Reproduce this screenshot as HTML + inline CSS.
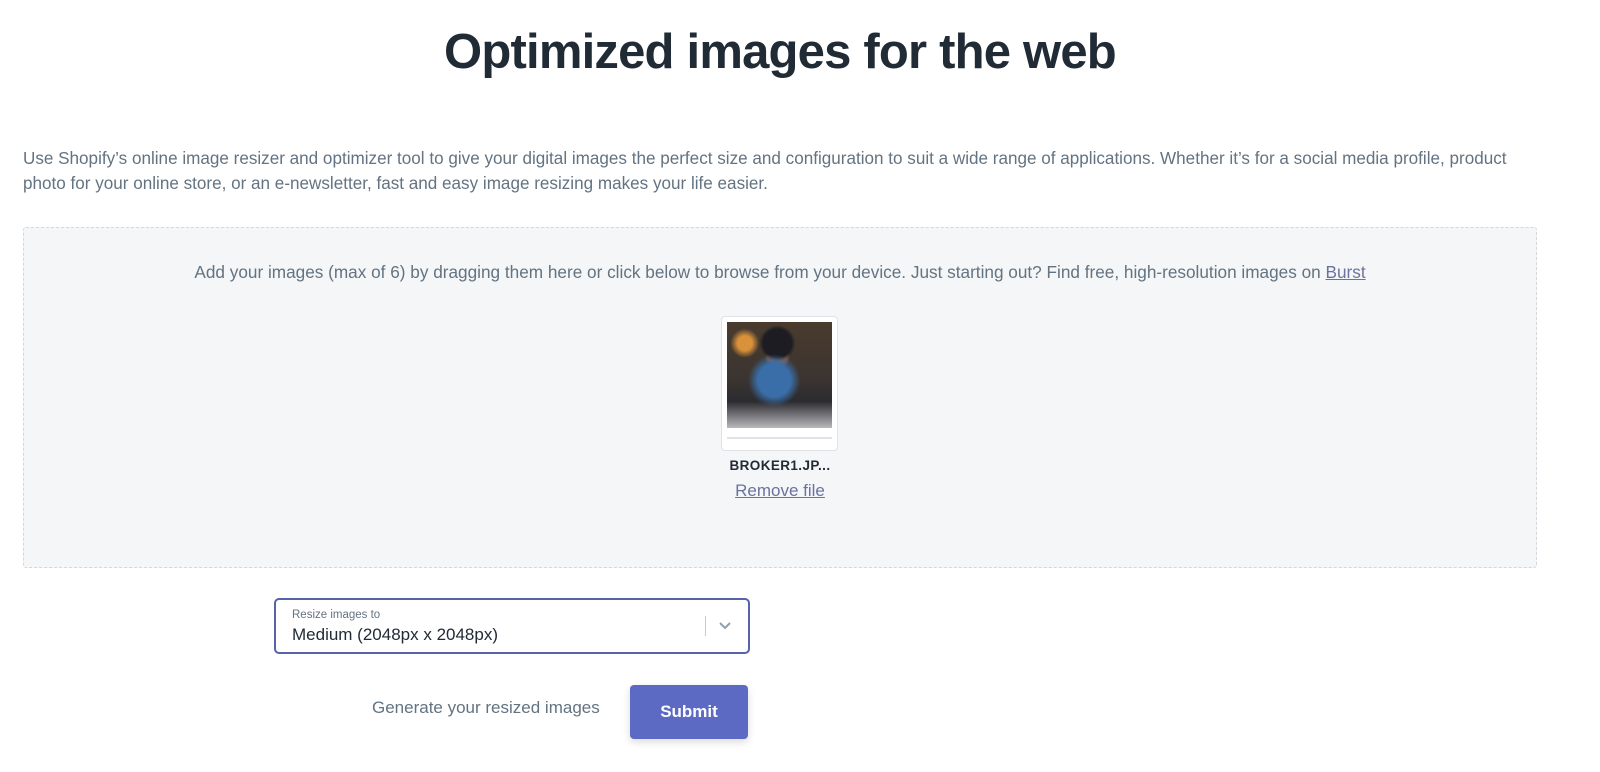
<!DOCTYPE html>
<html><head><style>
*{margin:0;padding:0;box-sizing:border-box}
body{width:1600px;height:772px;background:#fff;font-family:"Liberation Sans",sans-serif;position:relative;overflow:hidden}
.a{position:absolute}
h1{position:absolute;left:0;width:1560px;text-align:center;top:24px;font-size:49px;font-weight:bold;color:#212b36;letter-spacing:-0.8px}
p.i{position:absolute;left:23px;top:146px;width:1530px;font-size:17.1px;line-height:25px;color:#637381}
.dz{left:23px;top:227px;width:1514px;height:341px;background:#f4f6f8;border:1px dashed #d3d8dd;border-radius:3px}
</style></head><body>
<h1>Optimized images for the web</h1>
<p class="i">Use Shopify’s online image resizer and optimizer tool to give your digital images the perfect size and configuration to suit a wide range of applications. Whether it’s for a social media profile, product photo for your online store, or an e-newsletter, fast and easy image resizing makes your life easier.</p>
<div class="a dz"></div>
<div class="a" style="left:0;width:1560px;top:262px;text-align:center;font-size:17.2px;color:#637381">Add your images (max of 6) by dragging them here or click below to browse from your device. Just starting out? Find free, high-resolution images on <span style="text-decoration:underline;color:#6a739e">Burst</span></div>
<div class="a" style="left:721px;top:316px;width:117px;height:135px;background:#fff;border:1px solid #dfe3e8;border-radius:4px"></div>
<div class="a" style="left:727px;top:322px;width:105px;height:106px;background:radial-gradient(circle at 17% 20%,#d9913a 0 6%,transparent 12%),radial-gradient(ellipse at 45% 55%,#3a6ea8 0 20%,transparent 32%),radial-gradient(circle at 48% 20%,#1c1c22 0 14%,transparent 18%),radial-gradient(circle at 48% 33%,#8a5a3e 0 10%,transparent 14%),linear-gradient(180deg,#4a3b2e 0%,#3a3430 55%,#2b2b30 75%,#b9b9bd 100%)"></div>
<div class="a" style="left:727px;top:437px;width:105px;height:2px;background:#dfe3e8"></div>
<div class="a" style="left:700px;width:160px;top:458px;text-align:center;font-size:13.5px;font-weight:bold;letter-spacing:0.4px;color:#212b36">BROKER1.JP...</div>
<div class="a" style="left:700px;width:160px;top:481px;text-align:center;font-size:17px;color:#6a739e;text-decoration:underline">Remove file</div>
<div class="a" style="left:274px;top:598px;width:476px;height:56px;border:2px solid #5563a8;border-radius:5px;background:#fff"></div>
<div class="a" style="left:292px;top:609px;font-size:11.5px;color:#637381">Resize images to</div>
<div class="a" style="left:292px;top:625px;font-size:17px;color:#212b36">Medium (2048px x 2048px)</div>
<div class="a" style="left:705px;top:616px;width:1px;height:20px;background:#c4cdd5"></div>
<svg class="a" style="left:717px;top:620px" width="16" height="12" viewBox="0 0 16 12"><path d="M3 3l5 5 5-5" fill="none" stroke="#919eab" stroke-width="2"/></svg>
<div class="a" style="left:372px;top:698px;font-size:17px;color:#637381">Generate your resized images</div>
<div class="a" style="left:630px;top:685px;width:118px;height:54px;background:#5c6ac4;border-radius:4px;color:#fff;font-weight:bold;font-size:17px;text-align:center;line-height:54px;box-shadow:0 3px 8px rgba(0,0,0,.15)">Submit</div>
</body></html>
